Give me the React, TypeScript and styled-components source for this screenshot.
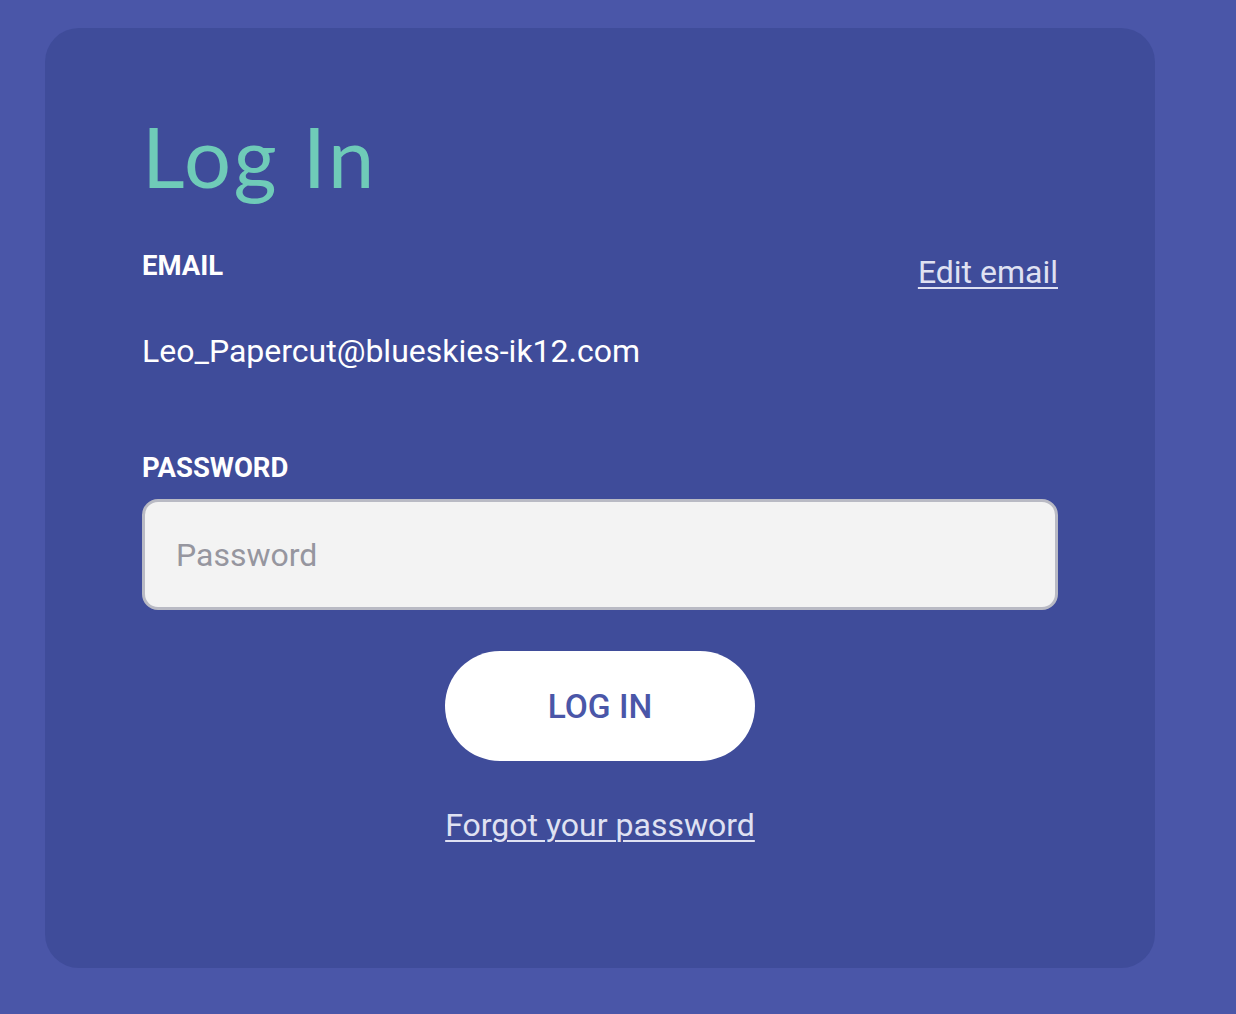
import styled, { createGlobalStyle } from 'styled-components';

const GlobalStyle = createGlobalStyle`
  html, body {
    margin: 0;
    padding: 0;
    background: #4a56a8;
  }
  body {
    font-family: Roboto, "Liberation Sans", sans-serif;
  }
`;

const Page = styled.div`
  min-height: 1014px;
  padding: 28px 81px 46px 45px;
  box-sizing: border-box;
`;

const Card = styled.div`
  width: 1110px;
  height: 940px;
  box-sizing: border-box;
  background: #3f4c9a;
  border-radius: 34px;
  padding: 78px 97px 0;
  display: flex;
  flex-direction: column;
`;

const Title = styled.h1`
  margin: 0;
  font-family: Lato, "Open Sans", sans-serif;
  font-weight: 400;
  font-size: 83px;
  letter-spacing: 2.5px;
  line-height: 100px;
  color: #6fcbb8;
`;

const LabelRow = styled.div`
  display: flex;
  justify-content: space-between;
  align-items: flex-start;
  margin-top: 45px;
`;

const Label = styled.div`
  font-size: 27.5px;
  font-weight: 700;
  color: #ffffff;
  line-height: 30px;
`;

const TextLink = styled.a`
  font-size: 32px;
  color: #dfe1f2;
  text-decoration: underline;
  text-underline-offset: 4px;
  text-decoration-thickness: 2px;
  cursor: pointer;
  line-height: 36px;
`;

const EditLink = styled(TextLink)`
  margin-top: 3px;
`;

const EmailValue = styled.div`
  margin-top: 43px;
  font-size: 32px;
  color: #ffffff;
  line-height: 36px;
`;

const PasswordLabel = styled(Label)`
  margin-top: 84px;
`;

const Input = styled.input`
  margin-top: 16px;
  height: 111px;
  box-sizing: border-box;
  width: 100%;
  border: 3px solid #b9bac4;
  border-radius: 16px;
  background: #f3f3f3;
  padding: 0 31px;
  font-family: Roboto, "Liberation Sans", sans-serif;
  font-size: 32px;
  color: #333;
  outline: none;
  &::placeholder {
    color: #96969f;
  }
`;

const Actions = styled.div`
  display: flex;
  flex-direction: column;
  align-items: center;
  margin-top: 41px;
`;

const Button = styled.button`
  width: 310px;
  height: 110px;
  border: none;
  border-radius: 55px;
  background: #ffffff;
  color: #4a56a8;
  font-family: Roboto, "Liberation Sans", sans-serif;
  font-weight: 500;
  font-size: 33.5px;
  cursor: pointer;
`;

const ForgotLink = styled(TextLink)`
  margin-top: 46px;
`;

export default function App() {
  return (
    <>
      <GlobalStyle />
      <Page>
        <Card>
          <Title>Log In</Title>
          <LabelRow>
            <Label>EMAIL</Label>
            <EditLink>Edit email</EditLink>
          </LabelRow>
          <EmailValue>Leo_Papercut@blueskies-ik12.com</EmailValue>
          <PasswordLabel>PASSWORD</PasswordLabel>
          <Input type="password" placeholder="Password" />
          <Actions>
            <Button>LOG IN</Button>
            <ForgotLink>Forgot your password</ForgotLink>
          </Actions>
        </Card>
      </Page>
    </>
  );
}
